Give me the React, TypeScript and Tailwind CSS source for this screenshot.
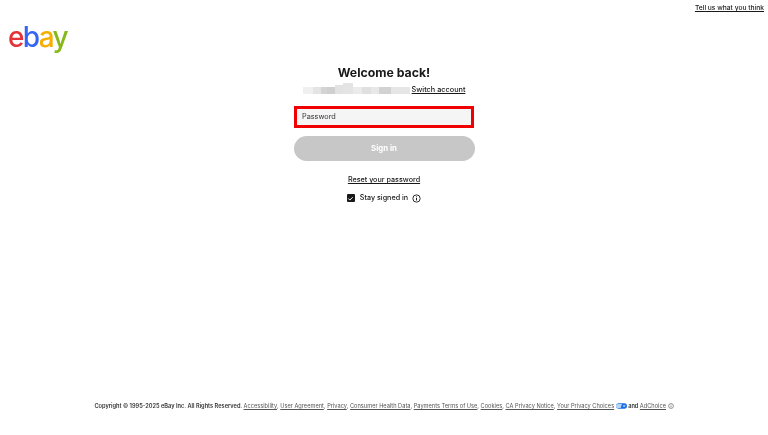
const pixels = [
  { w: 10, c: "h-[7px] bg-[#f0f0f0]" },
  { w: 8, c: "h-[7px] bg-[#e4e4e4]" },
  { w: 6, c: "h-[7px] bg-[#d4d4d4]" },
  { w: 8, c: "h-[7px] bg-[#d0d0d0]" },
  { w: 8, c: "h-[9px] bg-[#e2e2e2]" },
  { w: 10, c: "h-[11px] bg-[#e4e4e4]" },
  { w: 9, c: "h-[7px] bg-[#ebebeb]" },
  { w: 9, c: "h-[7px] bg-[#e0e0e0]" },
  { w: 8, c: "h-[7px] bg-[#e8e8e8]" },
  { w: 12, c: "h-[7px] bg-[#d2d2d2]" },
  { w: 19, c: "h-[7px] bg-[#e6e6e6]" },
]

const footerLinks = [
  "Accessibility",
  "User Agreement",
  "Privacy",
  "Consumer Health Data",
  "Payments Terms of Use",
  "Cookies",
  "CA Privacy Notice",
  "Your Privacy Choices",
]

function InfoIcon({ className }: { className: string }) {
  return (
    <svg viewBox="0 0 16 16" className={className} fill="none" stroke="currentColor">
      <circle cx="8" cy="8" r="6.5" strokeWidth="1.6" />
      <path d="M8 7v4.5" strokeWidth="1.8" />
      <circle cx="8" cy="4.8" r="1" fill="currentColor" stroke="none" />
    </svg>
  )
}

function PrivacyIcon() {
  return (
    <svg viewBox="0 0 24 12" className="inline-block w-[11px] h-[6px] align-[-0.5px]">
      <rect width="24" height="12" rx="6" fill="#1a6fe0" />
      <path d="M3 1.5h10L10 10.5H6a4.5 4.5 0 0 1-3-9z" fill="#b9d3f7" />
      <path d="M16 4l4 4m0-4l-4 4" stroke="#ffffff" strokeWidth="1.4" />
    </svg>
  )
}

export default function App() {
  return (
    <div className="h-[435px] bg-white flex flex-col overflow-hidden text-[#191919] font-['Inter',sans-serif] blur-[0.35px]">
      <div className="flex justify-end pt-[3px] pr-[4px] h-[28px]">
        <a className="text-[6.7px] leading-[10px] font-medium underline">Tell us what you think</a>
      </div>

      <div className="h-[24px] pl-[8px]">
        <div className="-mt-[3px] text-[28px] leading-[24px] font-medium tracking-[-1.7px]">
          <span className="text-[#e53238]">e</span>
          <span className="text-[#3665f3]">b</span>
          <span className="text-[#f5af02]">a</span>
          <span className="text-[#86b817]">y</span>
        </div>
      </div>

      <div className="flex flex-col items-center mt-[12px]">
        <h1 className="text-[12.3px] leading-[18px] font-bold">Welcome back!</h1>
        <div className="flex items-center mt-[2px] h-[12px]">
          <div className="flex items-end h-[7px] w-[107px] mr-[2px]">
            {pixels.map((p, i) => (
              <div key={i} className={p.c} style={{ width: p.w }} />
            ))}
          </div>
          <a className="text-[7.3px] font-medium underline">Switch account</a>
        </div>

        <div className="mt-[10px] w-[180px] h-[22px] border-[3px] border-[#f00000] bg-[#f5f5f5] flex items-center pt-[1px] pl-[5px] text-[7.3px] text-[#333333]">
          Password
        </div>

        <button className="mt-[8px] w-[181px] h-[25px] rounded-full bg-[#c7c7c7] text-white text-[7.8px] font-bold">
          Sign in
        </button>

        <a className="mt-[14px] text-[7.2px] leading-[10px] font-medium underline">Reset your password</a>

        <div className="flex items-center mt-[7px] h-[12px]">
          <div className="w-[8px] h-[8px] rounded-[1px] bg-[#191919] flex items-center justify-center">
            <svg viewBox="0 0 8 8" className="w-[7px] h-[7px]" fill="none" stroke="#ffffff" strokeWidth="1.1">
              <path d="M1.5 4l1.8 1.8L6.5 2.5" />
            </svg>
          </div>
          <span className="ml-[5px] text-[7.2px] font-medium">Stay signed in</span>
          <InfoIcon className="w-[9px] h-[9px] ml-[4px]" />
        </div>
      </div>

      <div className="mt-auto mb-[24px] text-center text-[5.66px] leading-[10px] text-[#555555] whitespace-nowrap">
        <span className="font-semibold text-[#333333]">Copyright © 1995-2025 eBay Inc. All Rights Reserved. </span>
        {footerLinks.map((l, i) => (
          <span key={l}>
            <a className="underline">{l}</a>
            {i < footerLinks.length - 1 ? ", " : " "}
          </span>
        ))}
        <PrivacyIcon />
        <span className="text-[#333333] font-semibold"> and </span>
        <a className="underline">AdChoice</a>{" "}
        <InfoIcon className="inline-block w-[6px] h-[6px] align-[-1px]" />
      </div>
    </div>
  )
}
